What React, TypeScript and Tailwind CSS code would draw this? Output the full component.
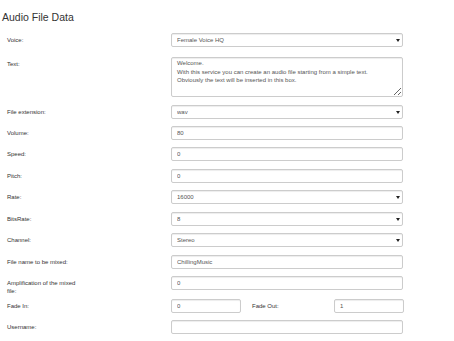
import React from 'react';

const fieldBase =
  'block h-[14px] rounded-[2px] border border-[#cccccc] bg-white px-[5px] text-[6px] leading-[12px] text-[#555555] shadow-[inset_0_1px_1px_rgba(0,0,0,0.075)] outline-none';

function Label({ children }: { children: React.ReactNode }) {
  return (
    <div className="w-[171px] shrink-0 pl-[7px] pt-[3px]">
      <div className="w-[70px] text-[6px] leading-[8px] text-[#333333]">{children}</div>
    </div>
  );
}

function TextField({ value, className = 'w-[232px]' }: { value: string; className?: string }) {
  return <input type="text" defaultValue={value} className={`${fieldBase} ${className}`} />;
}

function SelectField({ value, options }: { value: string; options: string[] }) {
  return (
    <div className="relative w-[232px]">
      <select defaultValue={value} className={`${fieldBase} w-full appearance-none`}>
        {options.map((o) => (
          <option key={o} value={o}>
            {o}
          </option>
        ))}
      </select>
      <svg
        className="pointer-events-none absolute right-[3px] top-[6px]"
        width="4"
        height="3"
        viewBox="0 0 4 3"
      >
        <path d="M0 0 L4 0 L2 3 Z" fill="#222222" />
      </svg>
    </div>
  );
}

function Row({
  label,
  mt,
  tall = false,
  children,
}: {
  label: React.ReactNode;
  mt: string;
  tall?: boolean;
  children: React.ReactNode;
}) {
  return (
    <div className={`flex items-start ${tall ? 'h-[40px]' : 'h-[14px]'} ${mt}`}>
      <Label>{label}</Label>
      {children}
    </div>
  );
}

export default function App() {
  return (
    <div
      className="h-[341px] w-[454px] overflow-hidden bg-white"
      style={{ fontFamily: '"Liberation Sans", Arial, sans-serif' }}
    >
      <h3 className="pl-[2px] pt-[11px] text-[10.5px] leading-[12px] font-normal text-[#333333]">
        Audio File Data
      </h3>

      <div className="mt-[10px] flex flex-col">
        <Row label="Voice:" mt="mt-0">
          <SelectField value="Female Voice HQ" options={['Female Voice HQ', 'Male Voice HQ']} />
        </Row>

        <Row label="Text:" mt="mt-[10px]" tall>
          <textarea
            className="block h-[40px] w-[232px] resize-y rounded-[2px] border border-[#cccccc] bg-white px-[5px] pt-[1px] text-[6px] leading-[8.5px] text-[#555555] shadow-[inset_0_1px_1px_rgba(0,0,0,0.075)] outline-none"
            defaultValue={
              'Welcome.\nWith this service you can create an audio file starting from a simple text.\nObviously the text will be inserted in this box.'
            }
          />
        </Row>

        <Row label="File extension:" mt="mt-[8px]">
          <SelectField value="wav" options={['wav', 'mp3', 'ogg']} />
        </Row>

        <Row label="Volume:" mt="mt-[7px]">
          <TextField value="80" />
        </Row>

        <Row label="Speed:" mt="mt-[7px]">
          <TextField value="0" />
        </Row>

        <Row label="Pitch:" mt="mt-[8px]">
          <TextField value="0" />
        </Row>

        <Row label="Rate:" mt="mt-[7px]">
          <SelectField value="16000" options={['8000', '16000', '22050', '44100']} />
        </Row>

        <Row label="BitsRate:" mt="mt-[8px]">
          <SelectField value="8" options={['8', '16']} />
        </Row>

        <Row label="Channel:" mt="mt-[7px]">
          <SelectField value="Stereo" options={['Mono', 'Stereo']} />
        </Row>

        <Row label="File name to be mixed:" mt="mt-[8px]">
          <TextField value="ChillingMusic" />
        </Row>

        <Row label="Amplification of the mixed file:" mt="mt-[7px]">
          <TextField value="0" />
        </Row>

        <Row label="Fade In:" mt="mt-[9px]">
          <TextField value="0" className="w-[70px]" />
          <div className="w-[93px] shrink-0 pl-[11px] pt-[3px] text-[6px] leading-[8px] text-[#333333]">
            Fade Out:
          </div>
          <TextField value="1" className="w-[70px]" />
        </Row>

        <Row label="Username:" mt="mt-[7px]">
          <TextField value="" />
        </Row>
      </div>
    </div>
  );
}
